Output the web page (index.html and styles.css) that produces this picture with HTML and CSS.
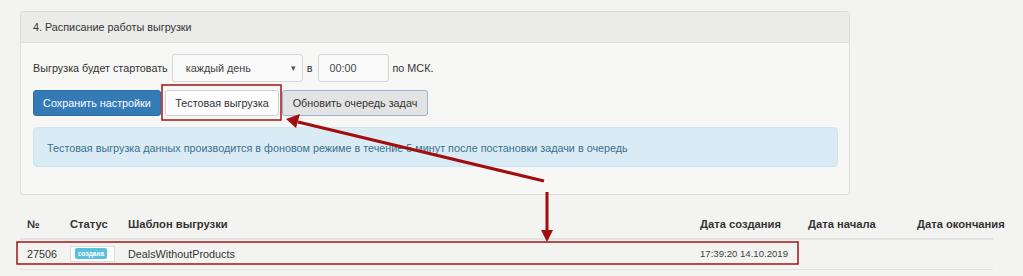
FILE: index.html
```html
<!DOCTYPE html>
<html lang="ru">
<head>
<meta charset="utf-8">
<link rel="stylesheet" href="styles.css">
</head>
<body>
<div class="page">
  <div class="panel">
    <div class="panel-heading">4. Расписание работы выгрузки</div>
    <div class="panel-body">
      <div class="form-row">
        <span class="label">Выгрузка будет стартовать</span>
        <span class="select"><span>каждый день</span><span class="caret">▾</span></span>
        <span class="label">в</span>
        <span class="input">00:00</span>
        <span class="label">по МСК.</span>
      </div>
      <div class="btn-row">
        <button class="btn btn-primary">Сохранить настройки</button>
        <button class="btn btn-default">Тестовая выгрузка</button>
        <button class="btn btn-gray">Обновить очередь задач</button>
      </div>
      <div class="alert">Тестовая выгрузка данных производится в фоновом режиме в течение 5 минут после постановки задачи в очередь</div>
    </div>
  </div>

  <div class="table">
    <div class="tr th">
      <div>№</div><div>Статус</div><div>Шаблон выгрузки</div><div>Дата создания</div><div>Дата начала</div><div>Дата окончания</div>
    </div>
    <div class="tr td">
      <div>27506</div>
      <div><span class="badge-box"><span class="badge">создана</span></span></div>
      <div>DealsWithoutProducts</div>
      <div class="date">17:39:20 14.10.2019</div>
      <div></div>
      <div></div>
    </div>
  </div>
</div>

<svg class="annot" width="1023" height="276" viewBox="0 0 1023 276">
  <rect x="162" y="85" width="119" height="35" fill="none" stroke="#a31515" stroke-width="1.5"/>
  <rect x="17" y="242" width="781" height="22" fill="none" stroke="#a31515" stroke-width="1.5"/>
  <line x1="544" y1="181" x2="298" y2="122" stroke="#a30d0d" stroke-width="3"/>
  <polygon points="286,119 300,114 296,128" fill="#a30d0d"/>
  <line x1="547" y1="192" x2="547" y2="232" stroke="#a30d0d" stroke-width="3"/>
  <polygon points="541,230 553,230 547,242" fill="#a30d0d"/>
</svg>
</body>
</html>
```

FILE: styles.css
```css
* { box-sizing: border-box; }
html, body { margin: 0; padding: 0; }
body {
  width: 1023px;
  height: 276px;
  overflow: hidden;
  background: #f3f3f1;
  font-family: "Liberation Sans", Arial, sans-serif;
  font-size: 10.8px;
  color: #333;
  position: relative;
}
.page { padding: 11px 0 0 20px; }

.panel {
  width: 830px;
  border: 1px solid #dcdcdc;
  border-radius: 3px;
  background: #f7f7f6;
}
.panel-heading {
  height: 31px;
  line-height: 30px;
  padding: 0 12px;
  background: #ebebea;
  border-bottom: 1px solid #dedede;
  color: #333;
}
.panel-body { padding: 11px 11px 27px 12px; }

.form-row {
  display: flex;
  align-items: center;
  gap: 4px;
  height: 28px;
  white-space: nowrap;
}
.select {
  width: 131px;
  height: 28px;
  border: 1px solid #d6d6d6;
  border-radius: 3px;
  background: #fafafa;
  display: flex;
  align-items: center;
  justify-content: space-between;
  padding: 0 6px 0 13px;
  color: #444;
}
.caret { font-size: 9px; color: #555; }
.input {
  width: 71px;
  height: 28px;
  border: 1px solid #d6d6d6;
  border-radius: 3px;
  background: #fafafa;
  display: flex;
  align-items: center;
  padding: 0 11px;
  color: #444;
  margin-left: 1px;
}

.btn-row {
  display: flex;
  gap: 4px;
  margin-top: 8px;
}
.btn {
  font-family: inherit;
  font-size: 10.8px;
  height: 26px;
  padding: 0;
  border-radius: 3px;
  border: 1px solid #ccc;
  white-space: nowrap;
  cursor: pointer;
}
.btn-primary {
  width: 128px;
  background: #337ab7;
  border-color: #2e6da4;
  color: #fff;
}
.btn-default {
  width: 114px;
  background: #fdfdfd;
  border-color: #d0d0d0;
  color: #333;
}
.btn-gray {
  width: 146px;
  margin-left: -1px;
  background: #e3e3e3;
  border-color: #98b5d9;
  color: #333;
}

.alert {
  margin-top: 11px;
  height: 40px;
  line-height: 40px;
  padding: 0 13px;
  background: #d9ecf5;
  border: 1px solid #cfe5ef;
  border-radius: 4px;
  color: #3d6f8c;
  white-space: nowrap;
}

.table {
  width: 973px;
  margin-top: 15px;
}
.tr {
  display: grid;
  grid-template-columns: 43px 58px 572px 108px 109px 1fr;
  align-items: center;
  padding-left: 7px;
  white-space: nowrap;
}
.th {
  height: 30px;
  font-size: 11.2px;
  font-weight: bold;
  border-bottom: 2px solid #e2e2e2;
}
.td {
  height: 30px;
  border-bottom: 1px solid #e2e2e2;
}
.td > div { padding-bottom: 2px; }
.date { font-size: 9.6px; color: #444; }

.badge-box {
  display: inline-flex;
  align-items: center;
  width: 45px;
  height: 16px;
  border: 1px solid #ddd;
  background: #fff;
  padding-left: 4px;
}
.badge {
  display: inline-block;
  background: #5bc0de;
  color: #fff;
  font-size: 6.5px;
  font-weight: bold;
  padding: 1px 3px;
  border-radius: 2px;
  line-height: 9px;
}

.annot {
  position: absolute;
  left: 0;
  top: 0;
  pointer-events: none;
}
```
